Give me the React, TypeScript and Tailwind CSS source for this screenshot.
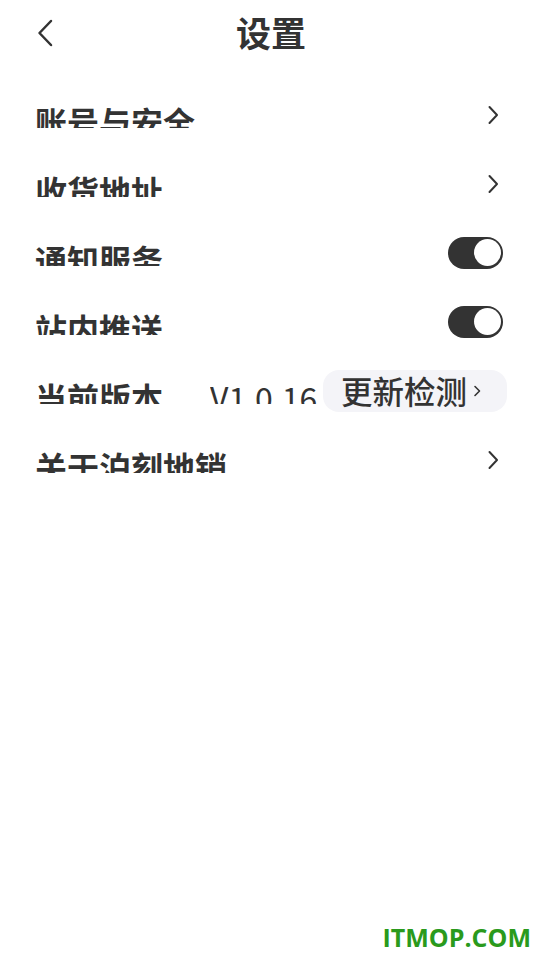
import React from 'react';

type Row =
  | { label: string; kind: 'link' }
  | { label: string; kind: 'toggle'; on: boolean }
  | { label: string; kind: 'version'; version: string };

const rows: Row[] = [
  { label: '账号与安全', kind: 'link' },
  { label: '收货地址', kind: 'link' },
  { label: '通知服务', kind: 'toggle', on: true },
  { label: '站内推送', kind: 'toggle', on: true },
  { label: '当前版本', kind: 'version', version: 'V1.0.16' },
  { label: '关于泊刻地销', kind: 'link' },
];

const Chevron = ({ className = '' }: { className?: string }) => (
  <svg width="12" height="20" viewBox="0 0 12 20" className={className} fill="none">
    <polyline points="2.5,2 10,10 2.5,18" stroke="#333" strokeWidth="2" strokeLinecap="round" strokeLinejoin="round" />
  </svg>
);

const Toggle = ({ on }: { on: boolean }) => (
  <div className={`w-[55px] h-[32px] rounded-full flex items-center px-[2px] ${on ? 'bg-[#333333] justify-end' : 'bg-[#dddddd] justify-start'}`}>
    <div className="w-[27px] h-[27px] rounded-full bg-white" />
  </div>
);

export default function App() {
  return (
    <div className="relative h-[960px] bg-white text-[#333333] font-['Noto_Sans_CJK_SC',sans-serif]">
      {/* header */}
      <div className="h-[70px] grid grid-cols-[1fr_auto_1fr] items-center px-[37px]">
        <svg width="16" height="28" viewBox="0 0 16 28" fill="none" className="mb-[4px]">
          <polyline points="14,2 2.5,14 14,26" stroke="#333" strokeWidth="2.5" strokeLinecap="round" strokeLinejoin="round" />
        </svg>
        <h1 className="text-[35px] font-bold leading-none mb-[8px] ml-[2px]">设置</h1>
        <div />
      </div>

      {/* list */}
      <div className="pt-[10px]">
        {rows.map((row) => (
          <div key={row.label} className="h-[69px] flex items-center pl-[35px] pr-[33px]">
            <div className="self-start mt-[25px] h-[23px] overflow-hidden text-[32px] font-bold leading-none">
              {row.label}
            </div>
            {row.kind === 'version' && (
              <div className="self-start mt-[25px] h-[23px] overflow-hidden ml-[47px] text-[32px] font-normal leading-none">
                {row.version}
              </div>
            )}
            <div className="flex-1" />
            {row.kind === 'link' && <Chevron className="mr-[8px]" />}
            {row.kind === 'toggle' && (
              <div className="mr-[4px]">
                <Toggle on={row.on} />
              </div>
            )}
            {row.kind === 'version' && (
              <div className="flex items-center h-[42px] rounded-[16px] bg-[#f4f4f8] pl-[18px] pr-[25px]">
                <span className="text-[31.5px] font-medium leading-none">更新检测</span>
                <svg width="10" height="14" viewBox="0 0 10 14" fill="none" className="ml-[5px]">
                  <polyline points="3,2.5 7.5,7 3,11.5" stroke="#333" strokeWidth="1.6" strokeLinecap="round" strokeLinejoin="round" />
                </svg>
              </div>
            )}
          </div>
        ))}
      </div>

      <div className="absolute right-[9px] bottom-[4px] text-[25px] font-bold text-[#2a9a1c] font-['Open_Sans',sans-serif]">
        ITMOP.COM
      </div>
    </div>
  );
}
